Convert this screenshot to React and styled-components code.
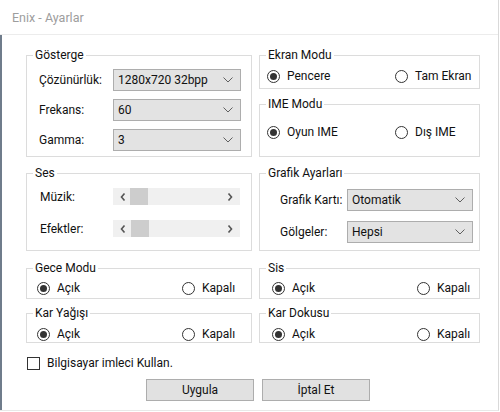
import React from 'react';
import styled, { createGlobalStyle } from 'styled-components';

const Global = createGlobalStyle`
  html, body { margin: 0; padding: 0; background: #fff; }
  body { font-family: Roboto, "Liberation Sans", Arial, sans-serif; font-size: 12px; color: #000; }
  * { box-sizing: border-box; }
`;

const Window = styled.div`
  width: 499px;
  height: 411px;
  border-right: 1px solid #d9d9d9;
  border-bottom: 1px solid #e8e8e8;
  display: flex;
  flex-direction: column;
  background: #fff;
`;

const TitleBar = styled.div`
  height: 35px;
  flex: none;
  border-bottom: 1px solid #ececec;
  padding-left: 12px;
  display: flex;
  align-items: center;
  color: #9d9d9d;
  font-size: 12.5px;
`;

const Body = styled.div`
  flex: 1;
  border-left: 2px solid #6f7c8b;
  padding: 13px 0 0 24px;
  display: flex;
  flex-direction: column;
`;

const Grid = styled.div`
  display: grid;
  grid-template-columns: 226px 221px;
  column-gap: 7px;
  align-items: start;
`;

const Stack = styled.div`
  display: flex;
  flex-direction: column;
  gap: 8px;
`;

const Group = styled.fieldset`
  margin: ${p => p.$mt || 0}px 0 0;
  padding: ${p => p.$pt}px 0 0;
  border: 1px solid #dcdcdc;
  min-width: 0;
  height: ${p => p.$h}px;
`;

const Legend = styled.legend`
  margin-left: 6px;
  padding: 0 2px;
  line-height: 14px;
  font-size: 12px;
  color: #111;
`;

const FormGrid = styled.div`
  display: grid;
  grid-template-columns: ${p => p.$cols};
  row-gap: ${p => p.$gap}px;
  align-items: center;
  padding-left: ${p => p.$pl}px;
`;

const Label = styled.span`
  line-height: 14px;
  color: #111;
`;

const Combo = styled.div`
  height: 22px;
  background: #e3e3e3;
  border: 1px solid #adadad;
  display: flex;
  align-items: center;
  justify-content: space-between;
  padding: 0 7px 0 4px;
  color: #111;
`;

const Chevron = () => (
  <svg width="10" height="6" viewBox="0 0 10 6">
    <polyline points="0.5,0.5 5,5 9.5,0.5" fill="none" stroke="#606060" strokeWidth="1" />
  </svg>
);

const Scroll = styled.div`
  height: 17px;
  background: #f0f0f0;
  display: flex;
  align-items: center;
  padding: 0 7px 0 7px;
`;

const Thumb = styled.div`
  width: 18px;
  height: 17px;
  background: #cdcdcd;
  margin-left: ${p => p.$left}px;
`;

const Spacer = styled.div`
  flex: 1;
`;

const Arrow = ({ dir }) => (
  <svg width="6" height="8" viewBox="0 0 6 8">
    <polyline
      points={dir === 'l' ? '4.5,0.5 1.5,4 4.5,7.5' : '1.5,0.5 4.5,4 1.5,7.5'}
      fill="none"
      stroke="#555"
      strokeWidth="1.6"
    />
  </svg>
);

const RadioRow = styled.div`
  display: grid;
  grid-template-columns: ${p => p.$col}px auto;
  align-items: center;
  padding-left: ${p => p.$pl}px;
`;

const Option = styled.label`
  display: flex;
  align-items: center;
  gap: 7px;
  height: 16px;
  color: #111;
`;

const Dot = styled.span`
  width: 13px;
  height: 13px;
  border-radius: 50%;
  border: 1px solid #333;
  background: #fff;
  display: inline-flex;
  align-items: center;
  justify-content: center;
  flex: none;
  &::after {
    content: '';
    width: 7px;
    height: 7px;
    border-radius: 50%;
    background: ${p => (p.$on ? '#333' : 'transparent')};
  }
`;

const CheckRow = styled.label`
  display: flex;
  align-items: center;
  gap: 7px;
  margin: 13px 0 0 1px;
  height: 14px;
  color: #111;
`;

const Box = styled.span`
  width: 13px;
  height: 13px;
  border: 1px solid #333;
  background: #fff;
  flex: none;
`;

const Buttons = styled.div`
  display: flex;
  gap: 8px;
  margin: 9px 0 0 120px;
`;

const Button = styled.div`
  width: 108px;
  height: 22px;
  background: #e1e1e1;
  border: 1px solid #adadad;
  display: flex;
  align-items: center;
  justify-content: center;
  color: #111;
`;

const Radio = ({ on, children }) => (
  <Option>
    <Dot $on={on} />
    {children}
  </Option>
);

const Select = ({ value }) => (
  <Combo>
    <span>{value}</span>
    <Chevron />
  </Combo>
);

const Slider = ({ left }) => (
  <Scroll>
    <Arrow dir="l" />
    <Thumb $left={left} />
    <Spacer />
    <Arrow dir="r" />
  </Scroll>
);

const OnOff = ({ pl }) => (
  <RadioRow $col={145} $pl={pl}>
    <Radio on>Açık</Radio>
    <Radio>Kapalı</Radio>
  </RadioRow>
);

export default function App() {
  return (
    <>
      <Global />
      <Window>
        <TitleBar>Enix - Ayarlar</TitleBar>
        <Body>
          <Grid>
            <Group $h={109} $pt={7}>
              <Legend>Gösterge</Legend>
              <FormGrid $cols="74px 128px" $gap={8} $pl={12}>
                <Label>Çözünürlük:</Label>
                <Select value="1280x720 32bpp" />
                <Label>Frekans:</Label>
                <Select value="60" />
                <Label>Gamma:</Label>
                <Select value="3" />
              </FormGrid>
            </Group>
            <Stack>
              <Group $h={41} $pt={6}>
                <Legend>Ekran Modu</Legend>
                <RadioRow $col={128} $pl={7}>
                  <Radio on>Pencere</Radio>
                  <Radio>Tam Ekran</Radio>
                </RadioRow>
              </Group>
              <Group $h={60} $pt={13}>
                <Legend>IME Modu</Legend>
                <RadioRow $col={128} $pl={7}>
                  <Radio on>Oyun IME</Radio>
                  <Radio>Dış IME</Radio>
                </RadioRow>
              </Group>
            </Stack>

            <Group $mt={9} $h={85} $pt={8}>
              <Legend>Ses</Legend>
              <FormGrid $cols="73px 127px" $gap={15} $pl={13}>
                <Label>Müzik:</Label>
                <Slider left={4} />
                <Label>Efektler:</Label>
                <Slider left={5} />
              </FormGrid>
            </Group>
            <Group $mt={9} $h={85} $pt={9}>
              <Legend>Grafik Ayarları</Legend>
              <FormGrid $cols="67px 126px" $gap={10} $pl={20}>
                <Label>Grafik Kartı:</Label>
                <Select value="Otomatik" />
                <Label>Gölgeler:</Label>
                <Select value="Hepsi" />
              </FormGrid>
            </Group>

            <Group $mt={10} $h={38} $pt={5}>
              <Legend>Gece Modu</Legend>
              <OnOff pl={10} />
            </Group>
            <Group $mt={10} $h={38} $pt={5}>
              <Legend>Sis</Legend>
              <OnOff pl={12} />
            </Group>

            <Group $mt={7} $h={37} $pt={6}>
              <Legend>Kar Yağışı</Legend>
              <OnOff pl={10} />
            </Group>
            <Group $mt={7} $h={37} $pt={6}>
              <Legend>Kar Dokusu</Legend>
              <OnOff pl={12} />
            </Group>
          </Grid>

          <CheckRow>
            <Box />
            Bilgisayar imleci Kullan.
          </CheckRow>

          <Buttons>
            <Button>Uygula</Button>
            <Button>İptal Et</Button>
          </Buttons>
        </Body>
      </Window>
    </>
  );
}
